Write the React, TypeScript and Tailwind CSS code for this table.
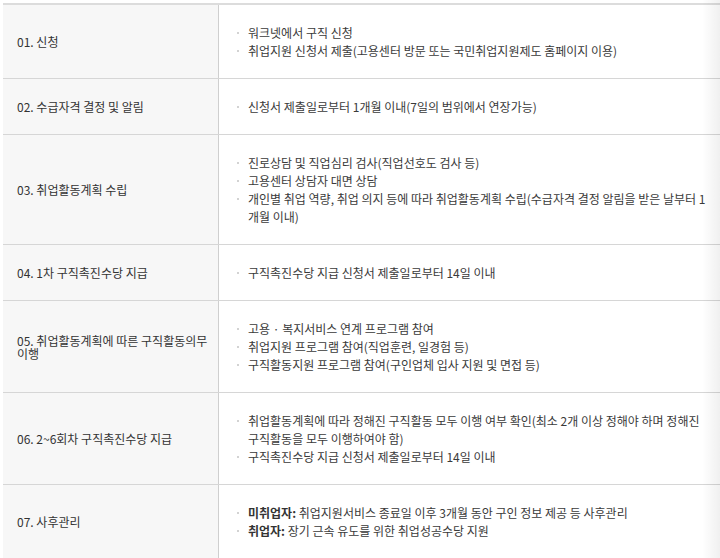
const rows: { step: string; items: { bold?: string; text: string }[] }[] = [
  {
    step: "01. 신청",
    items: [
      { text: "워크넷에서 구직 신청" },
      { text: "취업지원 신청서 제출(고용센터 방문 또는 국민취업지원제도 홈페이지 이용)" },
    ],
  },
  {
    step: "02. 수급자격 결정 및 알림",
    items: [{ text: "신청서 제출일로부터 1개월 이내(7일의 범위에서 연장가능)" }],
  },
  {
    step: "03. 취업활동계획 수립",
    items: [
      { text: "진로상담 및 직업심리 검사(직업선호도 검사 등)" },
      { text: "고용센터 상담자 대면 상담" },
      {
        text: "개인별 취업 역량, 취업 의지 등에 따라 취업활동계획 수립(수급자격 결정 알림을 받은 날부터 1개월 이내)",
      },
    ],
  },
  {
    step: "04. 1차 구직촉진수당 지급",
    items: [{ text: "구직촉진수당 지급 신청서 제출일로부터 14일 이내" }],
  },
  {
    step: "05. 취업활동계획에 따른 구직활동의무 이행",
    items: [
      { text: "고용 · 복지서비스 연계 프로그램 참여" },
      { text: "취업지원 프로그램 참여(직업훈련, 일경험 등)" },
      { text: "구직활동지원 프로그램 참여(구인업체 입사 지원 및 면접 등)" },
    ],
  },
  {
    step: "06. 2~6회차 구직촉진수당 지급",
    items: [
      {
        text: "취업활동계획에 따라 정해진 구직활동 모두 이행 여부 확인(최소 2개 이상 정해야 하며 정해진 구직활동을 모두 이행하여야 함)",
      },
      { text: "구직촉진수당 지급 신청서 제출일로부터 14일 이내" },
    ],
  },
  {
    step: "07. 사후관리",
    items: [
      { bold: "미취업자:", text: " 취업지원서비스 종료일 이후 3개월 동안 구인 정보 제공 등 사후관리" },
      { bold: "취업자:", text: " 장기 근속 유도를 위한 취업성공수당 지원" },
    ],
  },
]

export default function App() {
  return (
    <div
      className="relative w-[720px] h-[558px] overflow-hidden bg-white pl-[3px] pt-[3px] text-[12px] text-[#3a3a3a]"
      style={{ fontFamily: '"Noto Sans CJK KR", "Noto Sans", sans-serif' }}
    >
      <div className="border-t-2 border-[#dcdcdc] w-[740px]">
        {rows.map((row) => (
          <div key={row.step} className="flex border-b border-[#d6d6d6]">
            <div className="w-[216px] shrink-0 bg-[#f7f7f7] border-r border-[#cfcfcf] pl-[14px] pr-[10px] flex items-center leading-[13px] text-[#333]">
              {row.step}
            </div>
            <ul className="w-[490px] py-[18.5px] pl-[18px] pr-[2px] leading-[18px]">
              {row.items.map((item, i) => (
                <li key={i} className="relative pl-[11px]">
                  <span className="absolute left-0 top-[8px] w-[2px] h-[2px] rounded-full bg-[#c4c4c4]" />
                  {item.bold && <b className="font-bold text-[#333]">{item.bold}</b>}
                  {item.text}
                </li>
              ))}
            </ul>
          </div>
        ))}
      </div>
      <div className="absolute right-0 top-0 bottom-0 w-[18px] bg-gradient-to-r from-transparent to-black/[0.06]" />
    </div>
  )
}
